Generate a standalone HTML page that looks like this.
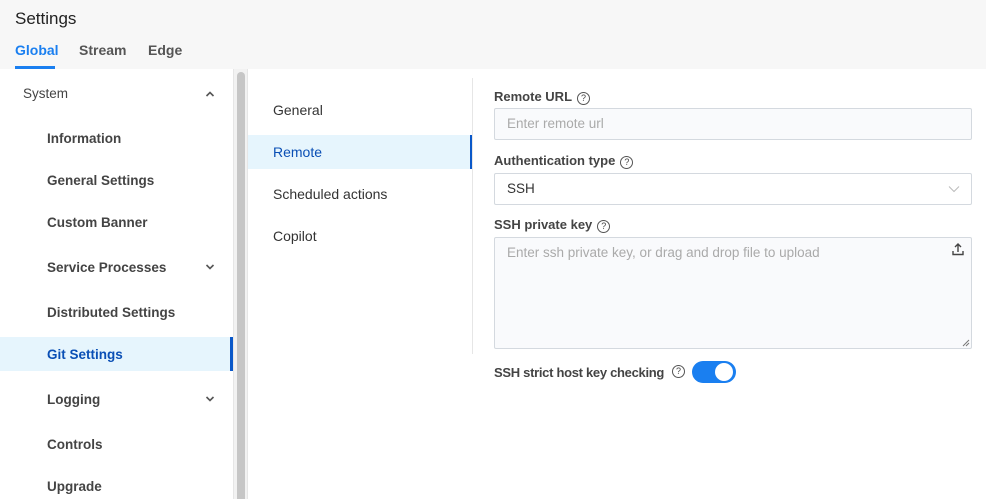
<!DOCTYPE html>
<html><head><style>
*{box-sizing:border-box;margin:0;padding:0}
body{width:986px;height:499px;overflow:hidden;background:#fff;font-family:"Liberation Sans",sans-serif;color:#333;position:relative}
.hdr{position:absolute;left:0;top:0;width:986px;height:69px;background:#f7f7f7}
.t{position:absolute;left:15px;top:9px;font-size:17px;color:#222}
.tab{position:absolute;top:42px;font-size:14px;color:#555;font-weight:bold}
.ul{position:absolute;left:15px;top:66px;width:40px;height:3px;background:#1a7ff0}
.nav{position:absolute;font-size:13.5px;color:#444;font-weight:bold}
.a{position:absolute;}
.lbl{position:absolute;left:494px;font-size:13px;font-weight:bold;color:#444}
.q{display:inline-block;width:13px;height:13px;border:1px solid #555;border-radius:50%;font-size:9px;text-align:center;line-height:11px;font-weight:normal;vertical-align:0px;margin-left:5px}
.inp{position:absolute;left:494px;width:478px;border:1px solid #d4d9df;border-radius:2px;background:#f9fafc;font-size:13.5px;color:#aaa;padding-left:12px}
</style></head><body>
<div class="hdr"></div>
<div class="t">Settings</div>
<div class="tab" style="left:15px;color:#1a7ff0">Global</div>
<div class="tab" style="left:79px">Stream</div>
<div class="tab" style="left:148px">Edge</div>
<div class="ul"></div>

<div class="a" style="left:0;top:337px;width:230px;height:34px;background:#e6f5fd"></div>
<div class="a" style="left:230px;top:337px;width:3px;height:34px;background:#0a58c9"></div>
<div class="a" style="left:233px;top:69px;width:15px;height:430px;background:#f2f2f2;border-left:1px solid #e6e6e6;border-right:1px solid #e6e6e6"></div>
<div class="a" style="left:237px;top:72px;width:8px;height:427px;background:#c6c6c6;border-radius:4px 4px 0 0"></div>

<div class="nav" style="left:23px;top:86px;font-weight:normal;color:#444">System</div>
<svg class="a" style="left:205px;top:90px" width="10" height="8"><path d="M1.5 6L5 2.5 8.5 6" stroke="#555" stroke-width="1.6" fill="none"/></svg>
<div class="nav" style="left:47px;top:131px">Information</div>
<div class="nav" style="left:47px;top:173px">General Settings</div>
<div class="nav" style="left:47px;top:215px">Custom Banner</div>
<div class="nav" style="left:47px;top:260px">Service Processes</div>
<svg class="a" style="left:205px;top:263px" width="10" height="8"><path d="M1.5 2L5 5.5 8.5 2" stroke="#555" stroke-width="1.6" fill="none"/></svg>
<div class="nav" style="left:47px;top:305px">Distributed Settings</div>
<div class="nav" style="left:47px;top:347px;color:#0a4fb5">Git Settings</div>
<div class="nav" style="left:47px;top:392px">Logging</div>
<svg class="a" style="left:205px;top:395px" width="10" height="8"><path d="M1.5 2L5 5.5 8.5 2" stroke="#555" stroke-width="1.6" fill="none"/></svg>
<div class="nav" style="left:47px;top:437px">Controls</div>
<div class="nav" style="left:47px;top:479px">Upgrade</div>

<div class="a" style="left:248px;top:135px;width:222px;height:34px;background:#e6f5fd"></div>
<div class="a" style="left:470px;top:135px;width:3px;height:34px;background:#0a58c9"></div>
<div class="a" style="left:472px;top:78px;width:1px;height:276px;background:#e6e6e6"></div>
<div class="nav" style="left:273px;top:102px;font-size:14px;font-weight:normal;color:#333">General</div>
<div class="nav" style="left:273px;top:144px;font-size:14px;color:#0a4fb5;font-weight:normal">Remote</div>
<div class="nav" style="left:273px;top:186px;font-size:14px;font-weight:normal;color:#333">Scheduled actions</div>
<div class="nav" style="left:273px;top:228px;font-size:14px;font-weight:normal;color:#333">Copilot</div>

<div class="lbl" style="top:89px">Remote URL<span class="q">?</span></div>
<div class="inp" style="top:108px;height:32px;line-height:30px">Enter remote url</div>
<div class="lbl" style="top:153px">Authentication type<span class="q">?</span></div>
<div class="inp" style="top:173px;height:32px;line-height:30px;background:#fff;color:#333">SSH</div>
<svg class="a" style="left:948px;top:185px" width="12" height="8"><path d="M1 1.5L6 6.5 11 1.5" stroke="#bbb" stroke-width="1" fill="none"/></svg>
<div class="lbl" style="top:217px">SSH private key<span class="q">?</span></div>
<div class="inp" style="top:237px;height:112px;padding-top:6px;line-height:18px">Enter ssh private key, or drag and drop file to upload</div>
<svg class="a" style="left:951px;top:242px" width="14" height="14"><path d="M7 10V2M4 5L7 2 10 5M2 9v3.5h10V9" stroke="#444" stroke-width="1.4" fill="none"/></svg>
<svg class="a" style="left:962px;top:339px" width="8" height="8"><path d="M1 7L7 1M4 7L7 4" stroke="#777" stroke-width="1"/></svg>
<div class="lbl" style="top:365px;letter-spacing:-0.3px">SSH strict host key checking</div>
<div class="a" style="left:672px;top:365px;width:13px;height:13px;border:1px solid #555;border-radius:50%;font-size:9px;text-align:center;line-height:11px;color:#444">?</div>
<div class="a" style="left:692px;top:361px;width:44px;height:22px;border-radius:11px;background:#1a7ff0"></div>
<div class="a" style="left:715px;top:363px;width:18px;height:18px;border-radius:50%;background:#fff"></div>
</body></html>
